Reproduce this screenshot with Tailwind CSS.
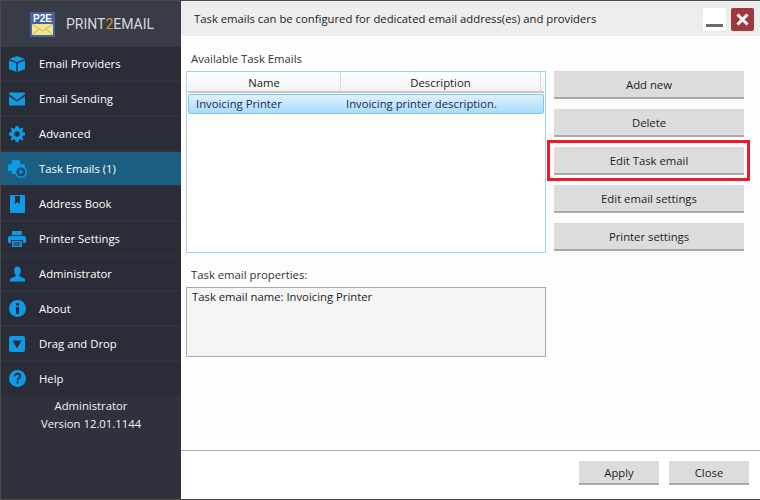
<!DOCTYPE html>
<html lang="en">
<head>
<meta charset="UTF-8">
<title>Print2Email</title>
<script src="https://cdn.jsdelivr.net/npm/@tailwindcss/browser@4"></script>
</head>
<body class="bg-white">
<div class="w-[760px] h-[500px] overflow-hidden flex border-t border-l border-b border-[#4a4a4a] font-['Open_Sans','Noto_Sans',sans-serif] text-[11.3px] leading-[16px] text-[#1c1c1c]">
  <!-- Sidebar -->
  <div class="w-[180px] shrink-0 flex flex-col bg-[#2f323d] text-white">
    <div class="h-[46px] bg-[#383c47] flex items-center pl-[29px] gap-[11px]">
      <svg width="25" height="25" viewBox="0 0 25 25">
        <rect width="25" height="25" fill="#45619f"/>
        <rect x="2" y="12" width="21" height="11" fill="#f3e58f"/>
        <path d="M2 12 L12.5 19 L23 12 M2 23 L9 17 M23 23 L16 17" stroke="#c9b65c" fill="none"/>
        <text x="12.5" y="10" text-anchor="middle" font-size="10" font-weight="700" fill="#fff" font-family="Liberation Sans">P2E</text>
      </svg>
      <span class="text-[14px] text-[#d6d8dc] font-['Roboto']">PRINT<span class="text-[#d9971c]">2</span>EMAIL</span>
    </div>
    <div class="flex flex-col">
      <div class="h-[35px] bg-[#2a2c38] border-b-2 border-[#30323e] flex items-center">
        <div class="w-[32px] mr-[6px] flex justify-center"><svg width="16" height="16" viewBox="0 0 16 16" fill="#0d9be6"><path d="M8 0 L16 3 L8 6 L0 3Z"/><path d="M0 4.5 L7.3 7.3 V16 L0 13Z"/><path d="M16 4.5 L8.7 7.3 V16 L16 13Z"/></svg></div>
        <span>Email Providers</span>
      </div>
      <div class="h-[35px] bg-[#2a2c38] border-b-2 border-[#30323e] flex items-center">
        <div class="w-[32px] mr-[6px] flex justify-center"><svg width="16" height="14" viewBox="0 0 17 14" fill="#0d9be6"><path d="M1 0 H16 A1 1 0 0 1 17 1 V2 L8.5 8 L0 2 V1 A1 1 0 0 1 1 0Z"/><path d="M0 4 L8.5 10 L17 4 V13 A1 1 0 0 1 16 14 H1 A1 1 0 0 1 0 13Z"/></svg></div>
        <span>Email Sending</span>
      </div>
      <div class="h-[35px] bg-[#2a2c38] border-b-2 border-[#30323e] flex items-center">
        <div class="w-[32px] mr-[6px] flex justify-center"><svg width="16" height="16" viewBox="0 0 16 16" fill="#0d9be6"><path fill-rule="evenodd" d="M6.6 0 H9.4 L9.8 2.2 L11.3 2.8 L13.2 1.6 L14.4 2.8 L13.2 4.7 L13.8 6.2 L16 6.6 V9.4 L13.8 9.8 L13.2 11.3 L14.4 13.2 L13.2 14.4 L11.3 13.2 L9.8 13.8 L9.4 16 H6.6 L6.2 13.8 L4.7 13.2 L2.8 14.4 L1.6 13.2 L2.8 11.3 L2.2 9.8 L0 9.4 V6.6 L2.2 6.2 L2.8 4.7 L1.6 2.8 L2.8 1.6 L4.7 2.8 L6.2 2.2Z M8 5.2 A2.8 2.8 0 1 0 8 10.8 A2.8 2.8 0 1 0 8 5.2Z"/></svg></div>
        <span>Advanced</span>
      </div>
      <div class="h-[33px] bg-[#1b5e82] flex items-center">
        <div class="w-[32px] mr-[6px] flex justify-center"><svg width="19" height="18" viewBox="0 0 19 18"><path fill="#0d9be6" d="M4 0 H12 V4 H15 A2 2 0 0 1 17 6 V8 H11 A3 3 0 0 0 8 11 V14 H4 V11 H1 A1 1 0 0 1 0 10 V6 A2 2 0 0 1 2 4 H4Z"/><circle cx="13" cy="12" r="6" fill="#0d9be6"/><circle cx="13" cy="12" r="4.6" fill="#1a4a68"/><path fill="#0d9be6" d="M11.5 9.5 L15.5 12 L11.5 14.5Z"/></svg></div>
        <span>Task Emails (1)</span>
      </div>
      <div class="h-[2px] bg-[#30323e]"></div>
      <div class="h-[35px] bg-[#2a2c38] border-b-2 border-[#30323e] flex items-center">
        <div class="w-[32px] mr-[6px] flex justify-center"><svg width="15" height="18" viewBox="0 0 15 18" fill="#0d9be6"><path fill-rule="evenodd" d="M1 0 H14 A1 1 0 0 1 15 1 V17 A1 1 0 0 1 14 18 H1 A1 1 0 0 1 0 17 V1 A1 1 0 0 1 1 0Z M5 1 V9 L7.5 7 L10 9 V1Z"/></svg></div>
        <span>Address Book</span>
      </div>
      <div class="h-[35px] bg-[#2a2c38] border-b-2 border-[#30323e] flex items-center">
        <div class="w-[32px] mr-[6px] flex justify-center"><svg width="18" height="16" viewBox="0 0 18 16" fill="#0d9be6"><path d="M4 0 H14 V4 H4Z"/><path d="M2 5 H16 A2 2 0 0 1 18 7 V11 A1 1 0 0 1 17 12 H15 V9 H3 V12 H1 A1 1 0 0 1 0 11 V7 A2 2 0 0 1 2 5Z"/><path d="M4 10 H14 V16 H4Z"/><path d="M5.5 12 H12.5 M5.5 14 H12.5" stroke="#2a2c38"/></svg></div>
        <span>Printer Settings</span>
      </div>
      <div class="h-[35px] bg-[#2a2c38] border-b-2 border-[#30323e] flex items-center">
        <div class="w-[32px] mr-[6px] flex justify-center"><svg width="15" height="16" viewBox="0 0 16 16" fill="#0d9be6"><path d="M8 0 C10.5 0 11.5 2 11.5 4.5 C11.5 6.5 10.8 8 10 9 V10.5 L15 12.5 C15.7 12.8 16 13.3 16 14 V16 H0 V14 C0 13.3 .3 12.8 1 12.5 L6 10.5 V9 C5.2 8 4.5 6.5 4.5 4.5 C4.5 2 5.5 0 8 0Z"/></svg></div>
        <span>Administrator</span>
      </div>
      <div class="h-[35px] bg-[#2a2c38] border-b-2 border-[#30323e] flex items-center">
        <div class="w-[32px] mr-[6px] flex justify-center"><svg width="17" height="17" viewBox="0 0 17 17"><circle cx="8.5" cy="8.5" r="8.5" fill="#0d9be6"/><rect x="7" y="3" width="3" height="2.6" fill="#2a2c38"/><rect x="7" y="7" width="3" height="7" fill="#2a2c38"/></svg></div>
        <span>About</span>
      </div>
      <div class="h-[35px] bg-[#2a2c38] border-b-2 border-[#30323e] flex items-center">
        <div class="w-[32px] mr-[6px] flex justify-center"><svg width="16" height="16" viewBox="0 0 16 16"><rect width="16" height="16" rx="2" fill="#0d9be6"/><path d="M3.5 4.5 H12.5 L8 12.5Z" fill="#2a2c38"/></svg></div>
        <span>Drag and Drop</span>
      </div>
      <div class="h-[33px] bg-[#2a2c38] flex items-center">
        <div class="w-[32px] mr-[6px] flex justify-center"><svg width="17" height="17" viewBox="0 0 17 17"><circle cx="8.5" cy="8.5" r="8.5" fill="#0d9be6"/><path d="M5.8 6.3 C5.8 4.6 7 3.8 8.5 3.8 C10.1 3.8 11.3 4.7 11.3 6.2 C11.3 8.2 8.6 8.2 8.6 10.2" fill="none" stroke="#2a2c38" stroke-width="1.9"/><rect x="7.6" y="11.4" width="2" height="2" fill="#2a2c38"/></svg></div>
        <span>Help</span>
      </div>
    </div>
    <div class="pt-[2px] text-center leading-[18px] text-[#f2f2f2]">
      <div>Administrator</div>
      <div>Version 12.01.1144</div>
    </div>
  </div>

  <!-- Main -->
  <div class="relative flex-1 flex flex-col bg-[#fdfdfd] min-w-0">
    <div class="h-[35px] shrink-0 bg-[#ededed] flex items-center pl-[13px] pr-[6px] pt-[1px]">
      <span class="flex-1">Task emails can be configured for dedicated email address(es) and providers</span>
      <div class="w-[23px] h-[23px] bg-white rounded-[2px] flex items-end justify-center pb-[4px] mr-[5px]"><div class="w-[17px] h-[3px] bg-[#6b6b6b]"></div></div>
      <div class="w-[23px] h-[23px] bg-[#a0393d] rounded-[2px] flex items-center justify-center">
        <svg width="13" height="13" viewBox="0 0 13 13"><path d="M1.5 1.5 L11.5 11.5 M11.5 1.5 L1.5 11.5" stroke="#fff" stroke-width="3"/></svg>
      </div>
    </div>

    <div class="flex-1 flex pl-[5px] pr-[15px] pt-[14px] min-h-0">
      <div class="w-[360px] shrink-0 flex flex-col">
        <div class="pl-[5px] pt-[1px] h-[21px] text-[#333]">Available Task Emails</div>
        <div class="h-[182px] border border-[#a9d3ea] bg-white px-px">
          <div class="h-[21px] flex border-b-2 border-[#c9c9c9] bg-gradient-to-b from-white to-[#f1f1f1]">
            <div class="w-[153px] border-r border-[#dcdcdc] text-center leading-[22px]">Name</div>
            <div class="w-[200px] border-r border-[#dcdcdc] text-center leading-[22px]">Description</div>
          </div>
          <div class="mt-px h-[20px] flex items-center border border-[#7cc4ec] rounded-[2px] bg-gradient-to-b from-[#dff2fd] to-[#a9dcfa] pl-[7px] text-[#1c2a4a]">
            <div class="w-[150px]">Invoicing Printer</div>
            <div>Invoicing printer description.</div>
          </div>
        </div>
        <div class="pl-[5px] pt-[14px] h-[34px] text-[#333]">Task email properties:</div>
        <div class="h-[70px] border border-[#a9a9a9] bg-[#f4f4f4] px-[5px] py-px">Task email name: Invoicing Printer</div>
      </div>
      <div class="ml-[8px] w-[190px] flex flex-col gap-[10px] pt-[21px]">
        <div class="h-[28px] bg-[#dcdcdc] border-b-[2px] border-[#a9a9a9] flex items-center justify-center pt-[2px]">Add new</div>
        <div class="h-[28px] bg-[#dcdcdc] border-b-[2px] border-[#a9a9a9] flex items-center justify-center pt-[2px]">Delete</div>
        <div class="h-[28px] bg-[#dcdcdc] border-b-[2px] border-[#a9a9a9] flex items-center justify-center pt-[2px]">Edit Task email</div>
        <div class="h-[28px] bg-[#dcdcdc] border-b-[2px] border-[#a9a9a9] flex items-center justify-center pt-[2px]">Edit email settings</div>
        <div class="h-[28px] bg-[#dcdcdc] border-b-[2px] border-[#a9a9a9] flex items-center justify-center pt-[2px]">Printer settings</div>
      </div>
    </div>

    <div class="h-[49px] shrink-0 bg-white border-t border-[#a9a9a9] flex justify-end gap-[10px] pt-[10px] pr-[11px]">
      <div class="w-[80px] h-[24px] bg-[#dcdcdc] border-b-[2px] border-[#a9a9a9] flex items-center justify-center pt-[2px]">Apply</div>
      <div class="w-[80px] h-[24px] bg-[#dcdcdc] border-b-[2px] border-[#a9a9a9] flex items-center justify-center pt-[2px]">Close</div>
    </div>

    <!-- red annotation round the Edit button -->
    <div class="absolute left-[366px] top-[139px] w-[203px] h-[41px] border-[3px] border-[#ed1c24]"></div>
  </div>
</div>
</body>
</html>
